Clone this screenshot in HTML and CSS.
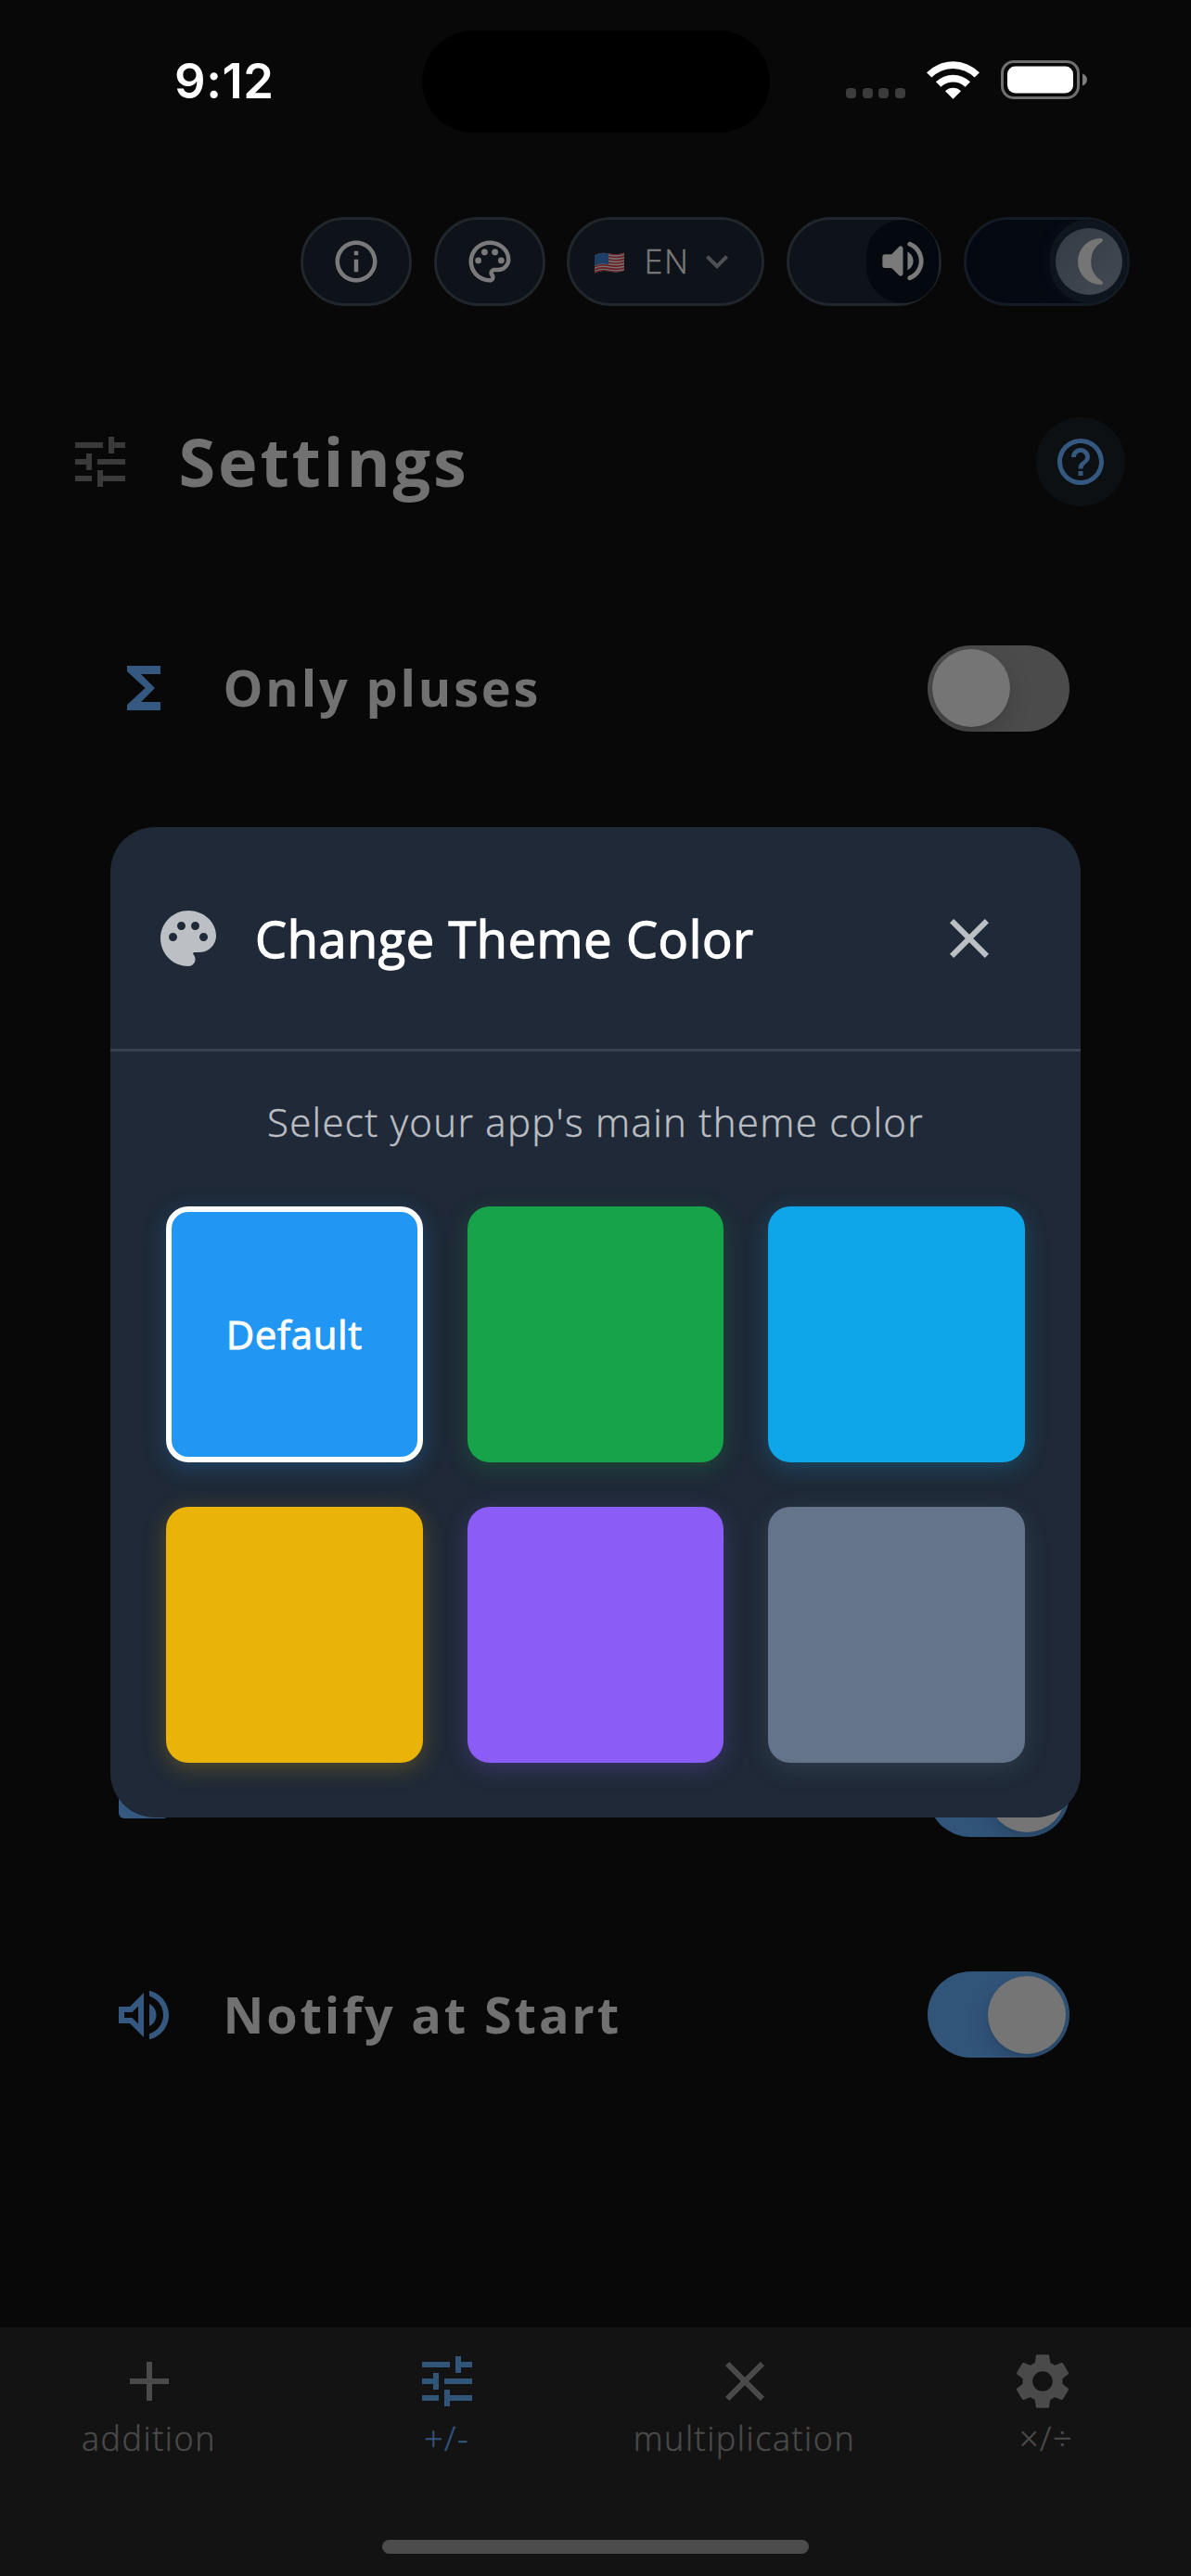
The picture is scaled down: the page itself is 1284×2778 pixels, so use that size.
FILE: index.html
```html
<!DOCTYPE html>
<html lang="en">
<head>
<meta charset="utf-8">
<title>Settings</title>
<link rel="stylesheet" href="styles.css">
</head>
<body>
<div class="screen">
  <header class="status">
    <div class="status-time">9:12</div>
    <div class="island"></div>
    <div class="status-icons">
      <div class="dots"><i></i><i></i><i></i><i></i></div>
      <svg class="wifi" viewBox="0 0 57 42">
        <path d="M0 13.3A40 40 0 0 1 57 13.3L51.6 18.6A32.5 32.5 0 0 0 5.4 18.6Z"/>
        <path d="M10 23.3A26.5 26.5 0 0 1 47 23.3L41.6 28.7A19 19 0 0 0 15.4 28.7Z"/>
        <path d="M20 33.2A12.5 12.5 0 0 1 37 33.2L28.5 41.7Z"/>
      </svg>
      <svg class="battery" viewBox="0 0 94 42">
        <rect x="1.5" y="1.5" width="82" height="39" rx="12.5" fill="none" stroke="#6f6f6f" stroke-width="3"/>
        <rect x="7" y="6.5" width="71" height="29" rx="8.5" fill="#fff"/>
        <path d="M88 14.5C91 15.5 93 18 93 21C93 24 91 26.500 88 27.500Z" fill="#7c7c7c"/>
      </svg>
    </div>
  </header>

  <div class="toolbar">
    <button class="pill pill-icon">
      <svg class="ic54" viewBox="0 0 24 24"><path d="M11 7h2v2h-2zm0 4h2v6h-2zm1-9C6.480 2 2 6.480 2 12s4.480 10 10 10 10-4.480 10-10S17.520 2 12 2zm0 18c-4.410 0-8-3.590-8-8s3.590-8 8-8 8 3.590 8 8-3.590 8-8 8z"/></svg>
    </button>
    <button class="pill pill-icon">
      <svg class="ic54" viewBox="0 0 24 24"><path d="M12 22C6.490 22 2 17.510 2 12S6.490 2 12 2s10 4.040 10 9c0 3.310-2.690 6-6 6h-1.770c-.28 0-.5.220-.5.500 0 .120.050.230.130.330.410.470.640 1.060.640 1.670 0 1.380-1.120 2.500-2.500 2.500zm0-18c-4.410 0-8 3.590-8 8s3.590 8 8 8c.28 0 .5-.220.500-.500 0-.160-.080-.280-.140-.350-.410-.460-.630-1.050-.630-1.650 0-1.380 1.120-2.500 2.500-2.500H16c2.210 0 4-1.790 4-4 0-3.860-3.590-7-8-7z"/><circle cx="6.500" cy="11.500" r="1.500"/><circle cx="9.500" cy="7.500" r="1.500"/><circle cx="14.500" cy="7.500" r="1.500"/><circle cx="17.500" cy="11.500" r="1.500"/></svg>
    </button>
    <button class="pill pill-lang">
      <svg class="flag" viewBox="0 0 32 23">
        <defs><clipPath id="wave"><path d="M0 3.500C5 0 10 .2 16 1.500S27 2.500 32 .5V19.500C27 21.800 22 22 16 20.600S5 20 0 22.500Z"/></clipPath></defs>
        <g clip-path="url(#wave)">
          <rect width="32" height="23" fill="#75716f"/>
          <g fill="none" stroke="#6c1c22" stroke-width="1.600">
            <path d="M0 3C5 .4 10 .4 16 1.600S27 2.600 32 .9"/>
            <path d="M0 6.200C5 3.600 10 3.600 16 4.800S27 5.800 32 4.100"/>
            <path d="M0 9.400C5 6.800 10 6.800 16 8S27 9 32 7.300"/>
            <path d="M0 12.600C5 10 10 10 16 11.200S27 12.200 32 10.500"/>
            <path d="M0 15.800C5 13.200 10 13.200 16 14.400S27 15.400 32 13.700"/>
            <path d="M0 19C5 16.400 10 16.400 16 17.600S27 18.600 32 16.900"/>
            <path d="M0 22C5 19.400 10 19.400 16 20.600S27 21.600 32 19.900"/>
          </g>
          <path d="M0 0H15V13.200C10 12 5 12.200 0 14.600Z" fill="#1d3f66"/>
        </g>
      </svg>
      <span class="lang">EN</span>
      <svg class="chev" viewBox="0 0 24 24"><path d="M7.410 8.590 12 13.170l4.590-4.580L18 10l-6 6-6-6z"/></svg>
    </button>
    <button class="pill pill-sound">
      <span class="sound-knob">
        <svg viewBox="0 0 24 24"><path d="M3 10v4c0 .55.45 1 1 1h3l3.290 3.290c.63.63 1.710.180 1.710-.710V6.410c0-.890-1.080-1.340-1.710-.710L7 9H4c-.55 0-1 .45-1 1zm13.500 2c0-1.770-1.020-3.290-2.500-4.030v8.050c1.480-.730 2.500-2.250 2.500-4.020zM14 4.450v.2c0 .38.25.71.6.85C17.180 6.530 19 9.060 19 12s-1.820 5.470-4.400 6.500c-.36.140-.6.470-.6.850v.2c0 .63.63 1.070 1.210.85C18.600 19.110 21 15.840 21 12s-2.400-7.110-5.790-8.400c-.58-.230-1.210.220-1.210.850z"/></svg>
      </span>
    </button>
    <button class="pill pill-dark">
      <span class="moon-halo"><span class="moon-knob">
        <svg viewBox="0 0 34 52"><path d="M30 3A23 23 0 1 0 30 49A27 27 0 0 1 30 3Z" stroke-width="4" stroke-linejoin="round" stroke="#757575"/></svg>
      </span></span>
    </button>
  </div>

  <div class="title-row">
    <svg class="ic72 title-icon" viewBox="0 0 24 24"><path d="M3 17v2h6v-2H3zM3 5v2h10V5H3zm10 16v-2h8v-2h-8v-2h-2v6h2zM7 9v2H3v2h4v2h2V9H7zm14 4v-2H11v2h10zm-6-4h2V7h4V5h-4V3h-2v6z"/></svg>
    <h1>Settings</h1>
    <span class="help">
      <svg viewBox="0 0 24 24"><path d="M11 18h2v-2h-2v2zm1-16C6.480 2 2 6.480 2 12s4.480 10 10 10 10-4.480 10-10S17.520 2 12 2zm0 18c-4.410 0-8-3.590-8-8s3.590-8 8-8 8 3.590 8 8-3.590 8-8 8zm0-14c-2.210 0-4 1.790-4 4h2c0-1.100.9-2 2-2s2 .9 2 2c0 2-3 1.750-3 5h2c0-2.250 3-2.500 3-5 0-2.210-1.790-4-4-4z"/></svg>
    </span>
  </div>

  <div class="rows">
    <div class="row">
      <svg class="ic72" viewBox="0 0 24 24"><path d="M18 4H6v2l6.500 6L6 18v2h12v-3h-7l5-5-5-5h7z"/></svg>
      <span class="row-label">Only pluses</span>
      <span class="switch"><i></i></span>
    </div>
    <div class="row row-covered">
      <svg class="ic72" viewBox="0 0 24 24"><rect x="3" y="3" width="18" height="18" rx="2"/></svg>
      <span class="switch on"><i></i></span>
    </div>
    <div class="row">
      <svg class="ic72" viewBox="0 0 24 24"><path d="M3 9v6h4l5 5V4L7 9H3zm7-.17v6.340L7.830 13H5v-2h2.830L10 8.830zM16.500 12c0-1.770-1.020-3.290-2.500-4.030v8.050c1.480-.730 2.500-2.250 2.500-4.020zM14 3.230v2.060c2.890.860 5 3.540 5 6.710s-2.110 5.850-5 6.710v2.060c4.010-.910 7-4.490 7-8.770s-2.990-7.860-7-8.770z"/></svg>
      <span class="row-label">Notify at Start</span>
      <span class="switch on"><i></i></span>
    </div>
  </div>

  <nav class="nav">
    <div class="tabs">
      <div class="tab"><svg class="ic72" viewBox="0 0 24 24"><path d="M19 13h-6v6h-2v-6H5v-2h6V5h2v6h6v2z"/></svg><span>addition</span></div>
      <div class="tab active"><svg class="ic72" viewBox="0 0 24 24"><path d="M3 17v2h6v-2H3zM3 5v2h10V5H3zm10 16v-2h8v-2h-8v-2h-2v6h2zM7 9v2H3v2h4v2h2V9H7zm14 4v-2H11v2h10zm-6-4h2V7h4V5h-4V3h-2v6z"/></svg><span>+/-</span></div>
      <div class="tab"><svg class="ic72" viewBox="0 0 24 24"><path d="M19 6.410 17.590 5 12 10.590 6.410 5 5 6.410 10.590 12 5 17.590 6.410 19 12 13.410 17.590 19 19 17.590 13.410 12z"/></svg><span>multiplication</span></div>
      <div class="tab"><svg class="ic72" viewBox="0 0 24 24"><path d="M19.140 12.940c.04-.3.060-.61.060-.94 0-.32-.02-.64-.07-.94l2.030-1.580c.18-.14.230-.41.120-.61l-1.920-3.320c-.12-.22-.37-.29-.59-.22l-2.390.960c-.5-.38-1.030-.7-1.620-.94l-.36-2.540c-.04-.24-.24-.41-.48-.41h-3.840c-.24 0-.43.17-.47.410l-.36 2.540c-.59.240-1.130.570-1.620.940l-2.390-.96c-.22-.08-.47 0-.59.220L2.740 8.870c-.12.210-.08.470.120.610l2.030 1.580c-.05.300-.09.630-.09.940s.02.640.07.940l-2.030 1.580c-.18.140-.23.410-.12.610l1.920 3.320c.12.220.37.290.59.220l2.390-.96c.5.380 1.030.700 1.620.940l.36 2.540c.05.240.24.410.48.410h3.840c.24 0 .44-.17.470-.41l.36-2.540c.59-.24 1.130-.56 1.620-.94l2.390.960c.22.080.47 0 .59-.22l1.920-3.320c.12-.22.070-.47-.12-.61l-2.010-1.580zM12 15.600c-1.980 0-3.600-1.620-3.600-3.600s1.620-3.600 3.600-3.600 3.600 1.620 3.600 3.600-1.620 3.600-3.600 3.600z"/></svg><span class="muldiv">×/÷</span></div>
    </div>
    <div class="home-bar"></div>
  </nav>

  <div class="overlay">
    <section class="dialog">
      <div class="dialog-head">
        <svg class="ic72" viewBox="0 0 24 24"><path d="M12 2C6.490 2 2 6.490 2 12s4.490 10 10 10c1.380 0 2.500-1.120 2.500-2.500 0-.61-.23-1.200-.64-1.670-.08-.1-.13-.21-.13-.33 0-.28.22-.5.500-.5H16c3.310 0 6-2.690 6-6 0-4.960-4.490-9-10-9zm5.500 11c-.83 0-1.500-.67-1.500-1.500s.67-1.500 1.500-1.500 1.500.67 1.500 1.500-.67 1.500-1.500 1.500zm-3-4c-.83 0-1.500-.67-1.500-1.500S13.670 6 14.500 6s1.500.67 1.500 1.500S15.330 9 14.500 9zM5 11.500c0-.83.67-1.500 1.500-1.500s1.500.67 1.500 1.500S7.330 13 6.500 13 5 12.330 5 11.500zm6-4c0 .83-.67 1.500-1.500 1.500S8 8.330 8 7.500 8.670 6 9.500 6s1.500.67 1.500 1.500z"/></svg>
        <h2>Change Theme Color</h2>
        <svg class="ic72" viewBox="0 0 24 24"><path d="M19 6.410 17.590 5 12 10.590 6.410 5 5 6.410 10.590 12 5 17.590 6.410 19 12 13.410 17.590 19 19 17.590 13.410 12z"/></svg>
      </div>
      <div class="dialog-body">
        <p>Select your app's main theme color</p>
        <div class="swatches">
          <div class="swatch blue">Default</div>
          <div class="swatch green"></div>
          <div class="swatch sky"></div>
          <div class="swatch yellow"></div>
          <div class="swatch violet"></div>
          <div class="swatch slate"></div>
        </div>
      </div>
    </section>
  </div>
</div>
</body>
</html>
```

FILE: styles.css
```css
* { box-sizing: border-box; }
body { margin: 0; background: #080808; }
svg { display: block; fill: currentColor; flex: none; }
h1, h2, p { margin: 0; }
.screen {
  position: relative; width: 1284px; height: 2778px; overflow: hidden;
  display: flex; flex-direction: column;
  background: #080808; color: #717171;
  font-family: "Open Sans", "Noto Sans", sans-serif;
}
.ic54 { width: 54px; height: 54px; }
.ic72 { width: 72px; height: 72px; }

/* status bar */
.status { height: 176px; flex: none; display: grid; grid-template-columns: 454.5px 375px 454.5px; align-items: center; }
.status-time { padding: 0 0 2px 188px; color: #fff; font: 600 52.5px/60px Inter, sans-serif; letter-spacing: .6px; }
.island { height: 110px; border-radius: 55px; background: #000; }
.status-icons { display: flex; align-items: flex-end; padding: 0 0 4px 82.5px; }
.dots { display: flex; gap: 6.700px; padding-bottom: 1px; }
.dots i { width: 11px; height: 11px; border-radius: 4px; background: #3c3c3c; }
.wifi { width: 57px; height: 42px; margin-left: 23px; fill: #fff; }
.battery { width: 94px; height: 42px; margin-left: 23px; }

/* toolbar */
.toolbar { margin-top: 57.500px; height: 96px; flex: none; display: flex; justify-content: flex-end; gap: 24px; padding-right: 66px; }
.pill {
  height: 96px; padding: 0; border: 3px solid #20262c; border-radius: 48px; background: #0e131a; color: #7a7a7a;
  display: flex; align-items: center; font-family: inherit;
}
.pill-icon { width: 120px; justify-content: center; }
.pill-lang { width: 213px; margin-left: -1px; padding-left: 27px; }
.flag { width: 32px; height: 23px; margin-top: 3px; }
.lang { width: 60px; margin-left: 21.500px; font-size: 36px; line-height: 48px; font-weight: 300; letter-spacing: 1.500px; text-align: left; -webkit-text-stroke: .5px currentColor; }
.chev { width: 48px; height: 48px; margin-left: -5.500px; color: #4d5054; }
.pill-sound { width: 167px; justify-content: flex-end; }
.sound-knob { width: 78px; height: 90px; border-radius: 45px; background: #04080f; display: flex; align-items: center; justify-content: center; }
.sound-knob svg { width: 59px; height: 59px; }
.pill-dark { width: 179px; justify-content: flex-end; overflow: hidden; background: linear-gradient(90deg, #040811, #050a13); border-color: #151b24; }
.moon-halo { width: 83px; height: 90px; border-radius: 45px; background: #0f151d; display: flex; align-items: center; justify-content: center; box-shadow: 0 0 12px #0c131b; }
.moon-knob { width: 72px; height: 72px; border-radius: 36px; background: linear-gradient(135deg, #343b45, #444a52); display: flex; align-items: center; justify-content: center; }
.moon-knob svg { width: 34px; height: 52px; color: #757575; }

/* title */
.title-row { flex: none; margin-top: 43.500px; height: 250px; display: flex; align-items: center; padding: 0 71px 0 71.500px; }
.title-icon { color: #3a3a3a; }
h1 { flex: 1; margin-left: 49px; padding-bottom: 3px; font-size: 72px; line-height: 100px; font-weight: 700; letter-spacing: 2.850px; }
.help { width: 96px; height: 96px; border-radius: 50%; background: #0c1013; color: #34587f; display: flex; align-items: center; justify-content: center; }
.help svg { width: 60px; height: 60px; }

/* settings rows */
.rows { flex: 1; display: flex; flex-direction: column; }
.row { height: 238.400px; display: flex; align-items: center; padding: 0 131px 0 119px; }
.row-covered { margin-top: 953.600px; }
.row .ic72 { color: #34587f; }
.row-label { margin-left: 49.500px; padding-bottom: 2px; font-size: 54px; line-height: 74px; font-weight: 700; letter-spacing: 2.850px; }
.switch { margin-left: auto; width: 153px; height: 93px; padding: 4.500px; border-radius: 46.500px; background: #4b4b4b; display: flex; overflow: hidden; }
.switch i { width: 84px; height: 84px; border-radius: 50%; background: #757575; box-shadow: 0 9px 24px rgba(0,0,0,.15), 0 3px 3px rgba(0,0,0,.06); }
.switch.on { background: #315479; justify-content: flex-end; }

/* bottom navigation */
.nav { height: 268px; flex: none; padding-top: 22px; background: #131313; display: flex; flex-direction: column; align-items: center; }
.tabs { width: 100%; display: grid; grid-template-columns: repeat(4, 1fr); }
.tab { display: flex; flex-direction: column; align-items: center; color: #4a4a4a; font-size: 36px; line-height: 52px; font-weight: 300; letter-spacing: 1.550px; -webkit-text-stroke: .5px currentColor; }
.tab.active { color: #315479; }
.muldiv { padding-left: 9px; }
.home-bar { width: 460px; height: 15px; margin-top: 83px; border-radius: 8px; background: #4c4c4c; }

/* theme dialog */
.overlay { position: absolute; inset: 0; display: flex; flex-direction: column; align-items: center; padding-top: 892px; }
.dialog { width: 1046px; height: 1068px; border-radius: 48px; background: #1f2937; }
.dialog-head { height: 242px; display: flex; align-items: center; padding: 0 84px 0 48px; border-bottom: 3px solid #374151; color: #bcbfc3; }
h2 { flex: 1; margin-left: 36px; color: #fff; font-size: 54px; line-height: 74px; font-weight: 400; letter-spacing: .65px; -webkit-text-stroke: 1.300px #fff; }
.dialog-body { padding: 47px 60px 60px; }
p { color: #bcbfc3; font-size: 42px; line-height: 58px; font-weight: 300; text-align: center; letter-spacing: 1.330px; -webkit-text-stroke: .5px currentColor; }
.swatches { display: grid; grid-template-columns: repeat(3, 1fr); gap: 47.500px 48px; margin-top: 61.500px; }
.swatch {
  aspect-ratio: 1; border-radius: 24px; background: var(--c); color: #fff;
  box-shadow: 0 6px 24px color-mix(in srgb, var(--c) 26%, transparent);
  display: flex; align-items: center; justify-content: center; font-size: 42px; line-height: 54px; letter-spacing: .6px; -webkit-text-stroke: .9px #fff;
}
.blue { --c: #2196f3; border: 6px solid #fff; }
.green { --c: #16a34a; }
.sky { --c: #0ea5e9; }
.yellow { --c: #eab308; }
.violet { --c: #8b5cf6; }
.slate { --c: #64748b; }
```
